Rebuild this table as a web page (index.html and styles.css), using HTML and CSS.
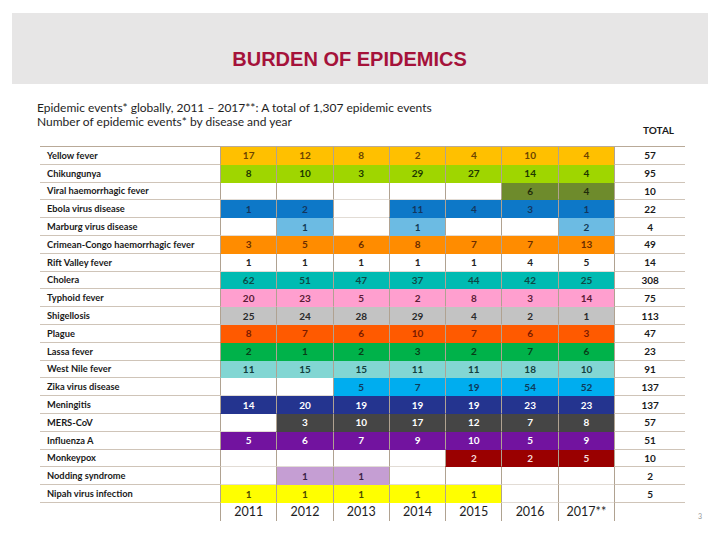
FILE: index.html
```html
<!DOCTYPE html>
<html>
<head>
<meta charset="utf-8">
<link rel="stylesheet" href="styles.css">
</head>
<body>
<div class="header"><h1>BURDEN OF EPIDEMICS</h1></div>
<div class="subtitle">
  <p>Epidemic events* globally, 2011 – 2017**: A total of 1,307 epidemic events</p>
  <p>Number of epidemic events* by disease and year</p>
</div>
<div class="total-row"><div class="total-head">TOTAL</div></div>
<div class="content">
<div class="table">
  <div class="lbl">Yellow fever</div><div class="n yf">17</div><div class="n yf">12</div><div class="n yf">8</div><div class="n yf">2</div><div class="n yf">4</div><div class="n yf">10</div><div class="n yf">4</div><div class="tot">57</div>
  <div class="lbl">Chikungunya</div><div class="n ck">8</div><div class="n ck">10</div><div class="n ck">3</div><div class="n ck">29</div><div class="n ck">27</div><div class="n ck">14</div><div class="n ck">4</div><div class="tot">95</div>
  <div class="lbl">Viral haemorrhagic fever</div><div class="n"></div><div class="n"></div><div class="n"></div><div class="n"></div><div class="n"></div><div class="n vh">6</div><div class="n vh">4</div><div class="tot">10</div>
  <div class="lbl">Ebola virus disease</div><div class="n eb">1</div><div class="n eb">2</div><div class="n"></div><div class="n eb">11</div><div class="n eb">4</div><div class="n eb">3</div><div class="n eb">1</div><div class="tot">22</div>
  <div class="lbl">Marburg virus disease</div><div class="n"></div><div class="n mb">1</div><div class="n"></div><div class="n mb">1</div><div class="n"></div><div class="n"></div><div class="n mb">2</div><div class="tot">4</div>
  <div class="lbl">Crimean-Congo haemorrhagic fever</div><div class="n cc">3</div><div class="n cc">5</div><div class="n cc">6</div><div class="n cc">8</div><div class="n cc">7</div><div class="n cc">7</div><div class="n cc">13</div><div class="tot">49</div>
  <div class="lbl">Rift Valley fever</div><div class="n">1</div><div class="n">1</div><div class="n">1</div><div class="n">1</div><div class="n">1</div><div class="n">4</div><div class="n">5</div><div class="tot">14</div>
  <div class="lbl">Cholera</div><div class="n ch">62</div><div class="n ch">51</div><div class="n ch">47</div><div class="n ch">37</div><div class="n ch">44</div><div class="n ch">42</div><div class="n ch">25</div><div class="tot">308</div>
  <div class="lbl">Typhoid fever</div><div class="n ty">20</div><div class="n ty">23</div><div class="n ty">5</div><div class="n ty">2</div><div class="n ty">8</div><div class="n ty">3</div><div class="n ty">14</div><div class="tot">75</div>
  <div class="lbl">Shigellosis</div><div class="n sh">25</div><div class="n sh">24</div><div class="n sh">28</div><div class="n sh">29</div><div class="n sh">4</div><div class="n sh">2</div><div class="n sh">1</div><div class="tot">113</div>
  <div class="lbl">Plague</div><div class="n pl">8</div><div class="n pl">7</div><div class="n pl">6</div><div class="n pl">10</div><div class="n pl">7</div><div class="n pl">6</div><div class="n pl">3</div><div class="tot">47</div>
  <div class="lbl">Lassa fever</div><div class="n la">2</div><div class="n la">1</div><div class="n la">2</div><div class="n la">3</div><div class="n la">2</div><div class="n la">7</div><div class="n la">6</div><div class="tot">23</div>
  <div class="lbl">West Nile fever</div><div class="n wn">11</div><div class="n wn">15</div><div class="n wn">15</div><div class="n wn">11</div><div class="n wn">11</div><div class="n wn">18</div><div class="n wn">10</div><div class="tot">91</div>
  <div class="lbl">Zika virus disease</div><div class="n"></div><div class="n"></div><div class="n zk">5</div><div class="n zk">7</div><div class="n zk">19</div><div class="n zk">54</div><div class="n zk">52</div><div class="tot">137</div>
  <div class="lbl">Meningitis</div><div class="n mn">14</div><div class="n mn">20</div><div class="n mn">19</div><div class="n mn">19</div><div class="n mn">19</div><div class="n mn">23</div><div class="n mn">23</div><div class="tot">137</div>
  <div class="lbl">MERS-CoV</div><div class="n"></div><div class="n me">3</div><div class="n me">10</div><div class="n me">17</div><div class="n me">12</div><div class="n me">7</div><div class="n me">8</div><div class="tot">57</div>
  <div class="lbl">Influenza A</div><div class="n in">5</div><div class="n in">6</div><div class="n in">7</div><div class="n in">9</div><div class="n in">10</div><div class="n in">5</div><div class="n in">9</div><div class="tot">51</div>
  <div class="lbl">Monkeypox</div><div class="n"></div><div class="n"></div><div class="n"></div><div class="n"></div><div class="n mp">2</div><div class="n mp">2</div><div class="n mp">5</div><div class="tot">10</div>
  <div class="lbl">Nodding syndrome</div><div class="n"></div><div class="n nd">1</div><div class="n nd">1</div><div class="n"></div><div class="n"></div><div class="n"></div><div class="n"></div><div class="tot">2</div>
  <div class="lbl">Nipah virus infection</div><div class="n np">1</div><div class="n np">1</div><div class="n np">1</div><div class="n np">1</div><div class="n np">1</div><div class="n"></div><div class="n"></div><div class="tot">5</div>
  <div class="ylbl"></div><div class="yr">2011</div><div class="yr">2012</div><div class="yr">2013</div><div class="yr">2014</div><div class="yr">2015</div><div class="yr">2016</div><div class="yr">2017**</div><div class="ytot"></div>
</div>
<div class="pagenum">3</div>
</div>
</body>
</html>
```
FILE: styles.css
```css
body {
  margin: 0;
  width: 720px;
  height: 540px;
  overflow: hidden;
  background: #fff;
  font-family: Lato, "Liberation Sans", sans-serif;
  color: #1a1a1a;
}

.header {
  margin: 13px 12px 0;
  height: 71px;
  box-sizing: border-box;
  background: #e7e6e6;
  display: flex;
  align-items: flex-end;
  justify-content: center;
  padding: 0 21px 15px 0;
}

.header h1 {
  margin: 0;
  font: bold 20px/1 "Liberation Sans", Arial, sans-serif;
  color: #a5123a;
}

.subtitle {
  margin: 17px 0 0 37px;
  font-size: 12px;
  line-height: 14px;
  color: #1e1e1e;
}

.subtitle p {
  margin: 0;
}

.total-row {
  margin-left: 40px;
  width: 645px;
  height: 17px;
  display: flex;
  justify-content: flex-end;
}

.total-head {
  width: 71px;
  box-sizing: border-box;
  padding-left: 29px;
  margin-top: -4px;
  font-weight: bold;
  font-size: 10px;
  line-height: 10px;
  color: #1a1a1a;
}

.content {
  display: flex;
  align-items: flex-end;
}

.table {
  margin-left: 40px;
  width: 645px;
  display: grid;
  grid-template-columns: 180px repeat(7, 56.3px) 71px;
  grid-auto-rows: 17.8px;
  border-top: 1px solid #b9aa98;
}

.lbl {
  display: flex;
  align-items: center;
  padding-left: 7px;
  font-weight: 700;
  font-size: 9.3px;
  color: #1a1a1a;
  border-bottom: 1px solid #cfc4b8;
}

.n {
  display: flex;
  align-items: center;
  justify-content: center;
  font-weight: 700;
  font-size: 10px;
  color: #222;
  border-left: 1px solid #b0a291;
  border-bottom: 1px solid #e2dcd5;
}

.tot {
  display: flex;
  align-items: center;
  justify-content: center;
  font-weight: 700;
  font-size: 10px;
  color: #1a1a1a;
  border-left: 1px solid #b0a291;
  border-bottom: 1px solid #cfc4b8;
}

.yr {
  display: flex;
  align-items: center;
  justify-content: center;
  font-size: 12.5px;
  color: #1e1e1e;
  border-left: 1px solid #b0a291;
  height: 18px;
}

.ytot {
  border-left: 1px solid #b0a291;
  height: 18px;
}

.pagenum {
  margin: 0 0 1px 13px;
  font-size: 7px;
  line-height: 7px;
  color: #999;
}

.yf { background: #ffc000; color: #6b4400; border-bottom-color: transparent; }
.ck { background: #9fd600; color: #203800; border-bottom-color: transparent; }
.vh { background: #6e8b2c; color: #1f2b0a; border-bottom-color: transparent; }
.eb { background: #0d78c8; color: #14365c; border-bottom-color: transparent; }
.mb { background: #6cbbe3; color: #123a55; border-bottom-color: transparent; }
.cc { background: #ff8c00; color: #6a2c00; border-bottom-color: transparent; }
.ch { background: #00bbb2; color: #0d4a46; border-bottom-color: transparent; }
.ty { background: #ff9fcf; color: #5a1a35; border-bottom-color: transparent; }
.sh { background: #c3c3c3; color: #2a2a2a; border-bottom-color: transparent; }
.pl { background: #ff5a00; color: #7a1a00; border-bottom-color: transparent; }
.la { background: #00b24a; color: #083d18; border-bottom-color: transparent; }
.wn { background: #82d6d3; color: #123f3e; border-bottom-color: transparent; }
.zk { background: #00adef; color: #0f3a5a; border-bottom-color: transparent; }
.mn { background: #24348f; color: #fff; border-bottom-color: transparent; }
.me { background: #454545; color: #fff; border-bottom-color: transparent; }
.in { background: #72139f; color: #fff; border-bottom-color: transparent; }
.mp { background: #9a0000; color: #f5dede; border-bottom-color: transparent; }
.nd { background: #c59ed3; color: #3a1f45; border-bottom-color: transparent; }
.np { background: #ffff00; color: #4a4a00; border-bottom-color: transparent; }
```
